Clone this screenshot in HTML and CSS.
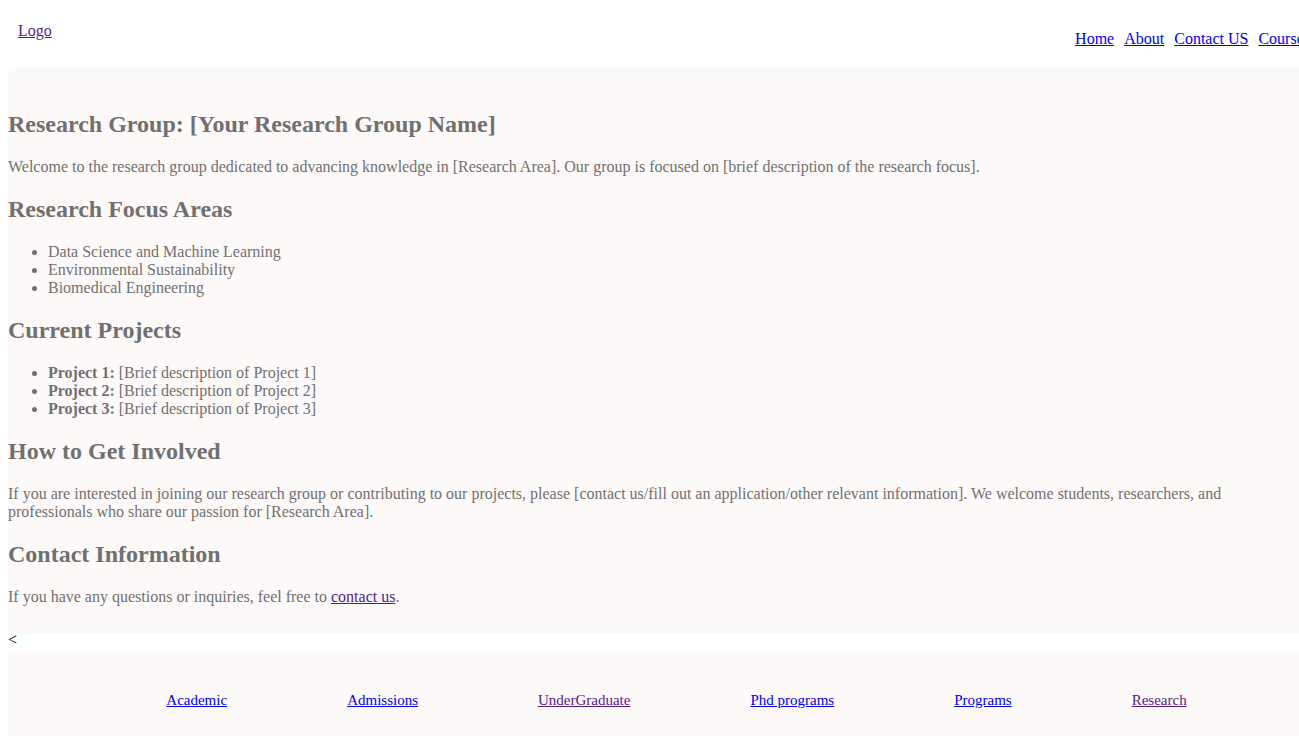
FILE: index.html
```html
<!DOCTYPE html>
<html lang="en">
<head>
<meta charset="utf-8">
<title>Research Group</title>
<link rel="stylesheet" href="styles.css">
</head>
<body>
<div class="page">
  <header class="site-header">
    <a class="logo" href="#">Logo</a>
    <nav>
      <ul class="nav-list">
        <li><a class="nav-link" href="#">Home</a></li>
        <li><a class="nav-link" href="#">About</a></li>
        <li><a class="nav-link" href="#">Contact US</a></li>
        <li><a class="nav-link" href="#">Courses</a></li>
      </ul>
    </nav>
  </header>

  <main class="content">
    <h2 class="heading">Research Group: [Your Research Group Name]</h2>
    <p class="text">Welcome to the research group dedicated to advancing knowledge in [Research Area]. Our group is focused on [brief description of the research focus].</p>

    <h2 class="heading">Research Focus Areas</h2>
    <ul class="list">
      <li>Data Science and Machine Learning</li>
      <li>Environmental Sustainability</li>
      <li>Biomedical Engineering</li>
    </ul>

    <h2 class="heading">Current Projects</h2>
    <ul class="list">
      <li><strong>Project 1:</strong> [Brief description of Project 1]</li>
      <li><strong>Project 2:</strong> [Brief description of Project 2]</li>
      <li><strong>Project 3:</strong> [Brief description of Project 3]</li>
    </ul>

    <h2 class="heading">How to Get Involved</h2>
    <p class="text">If you are interested in joining our research group or contributing to our projects, please [contact us/fill out an application/other relevant information]. We welcome students, researchers, and professionals who share our passion for [Research Area].</p>

    <h2 class="heading">Contact Information</h2>
    <p class="text">If you have any questions or inquiries, feel free to <a class="visited" href="#">contact us</a>.</p>
  </main>
  <div class="stray">&lt;</div>

  <footer class="site-footer">
    <ul class="footer-list">
      <li><a class="footer-link" href="#">Academic</a></li>
      <li><a class="footer-link" href="#">Admissions</a></li>
      <li><a class="footer-link visited" href="#">UnderGraduate</a></li>
      <li><a class="footer-link" href="#">Phd programs</a></li>
      <li><a class="footer-link" href="#">Programs</a></li>
      <li><a class="footer-link visited" href="#">Research</a></li>
    </ul>
  </footer>
</div>
</body>
</html>
```

FILE: styles.css
```css
html {
  overflow: hidden;
}

body {
  margin: 8px -41px 0 8px;
  font-family: "Liberation Serif", "Times New Roman", serif;
  font-size: 16px;
  color: #000;
  background: #fff;
}

a {
  color: #0000ee;
}

a.visited, .logo {
  color: #551a8b;
}

.site-header {
  display: flex;
  justify-content: space-between;
  align-items: flex-start;
  height: 60px;
}

.logo {
  margin: 14px 0 0 10px;
}

.nav-list {
  display: flex;
  gap: 10px;
  list-style: none;
  margin: 22px 30px 0 0;
  padding: 0;
}

.content {
  margin-top: 3px;
  background: #fdf9f9;
  border-radius: 6px;
  box-shadow: 0 0 6px rgba(0, 0, 0, 0.08);
  padding: 20px 40px 9px 0;
  color: #707070;
}

.heading {
  font-size: 24px;
  margin: 20px 0;
}

.text {
  margin: 16px 0;
}

.list {
  margin: 16px 0;
  padding-left: 40px;
}

.stray {
  line-height: 18px;
}

.site-footer {
  margin-top: 3px;
  background: #fdf9f9;
  border-radius: 6px;
  box-shadow: 0 0 6px rgba(0, 0, 0, 0.05);
  padding: 23px 0 11px;
}

.footer-list {
  display: flex;
  justify-content: center;
  gap: 120px;
  list-style: none;
  margin: 16px 0;
  padding: 0 0 0 5px;
  font-size: 15px;
  line-height: 18px;
}
```
